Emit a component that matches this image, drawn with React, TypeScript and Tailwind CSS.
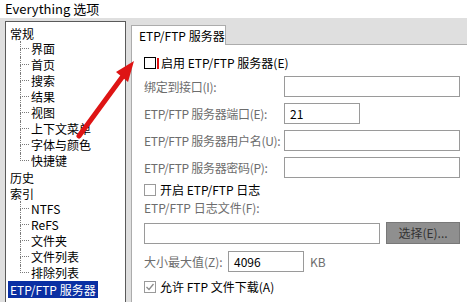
import React from 'react';

type TreeItem = { label: string; child?: boolean; last?: boolean; selected?: boolean };

const treeItems: TreeItem[] = [
  { label: '常规' },
  { label: '界面', child: true },
  { label: '首页', child: true },
  { label: '搜索', child: true },
  { label: '结果', child: true },
  { label: '视图', child: true },
  { label: '上下文菜单', child: true },
  { label: '字体与颜色', child: true },
  { label: '快捷键', child: true, last: true },
  { label: '历史' },
  { label: '索引' },
  { label: 'NTFS', child: true },
  { label: 'ReFS', child: true },
  { label: '文件夹', child: true },
  { label: '文件列表', child: true },
  { label: '排除列表', child: true, last: true },
  { label: 'ETP/FTP 服务器', selected: true },
];

function TreeRow({ item }: { item: TreeItem }) {
  if (item.child) {
    return (
      <div className="flex h-[16px] items-center pl-[14px]">
        <div className="flex h-[16px] w-[9px] flex-col">
          <div className="h-[8px] border-l border-b border-dotted border-[#7a7a7a]" />
          <div className={`h-[8px] ${item.last ? '' : 'border-l border-dotted border-[#7a7a7a]'}`} />
        </div>
        <span className="ml-[2px] leading-[16px] text-black">{item.label}</span>
      </div>
    );
  }
  return (
    <div className="flex h-[16px] items-center pl-[2px]">
      <span
        className={`h-[17px] whitespace-nowrap px-[2px] leading-[17px] ${
          item.selected ? 'bg-[#0a2fa3] text-white' : 'text-black'
        }`}
      >
        {item.label}
      </span>
    </div>
  );
}

function Box({ className = '', children }: { className?: string; children?: React.ReactNode }) {
  return (
    <div className={`flex h-[21px] shrink-0 items-center border border-[#9a9a9a] bg-white pl-[5px] text-black ${className}`}>
      {children}
    </div>
  );
}

function LabeledInput({ label, width = 'w-[176px]', value }: { label: string; width?: string; value?: string }) {
  return (
    <div className="mb-[6px] flex h-[21px] items-center">
      <span className="w-[140px] shrink-0 whitespace-nowrap tracking-[-0.3px] text-[#6d6d6d]">{label}</span>
      <Box className={width}>{value}</Box>
    </div>
  );
}

export default function App() {
  return (
    <div
      className="relative h-[302px] w-[467px] overflow-hidden bg-[#dfdfdf] text-[12px]"
      style={{ fontFamily: '"Noto Sans CJK SC", "Noto Sans", sans-serif' }}
    >
      <div className="flex h-[18px] items-center bg-white pl-[5px] text-[13px] text-black">
        Everything 选项
      </div>

      <div className="flex">
        {/* tree */}
        <div className="ml-[5px] mt-[3px] h-[300px] w-[121px] shrink-0 border border-[#5a5a5a] bg-white pt-[3px]">
          {treeItems.map((item) => (
            <TreeRow key={item.label} item={item} />
          ))}
        </div>

        {/* tab page */}
        <div className="ml-[5px] mt-[7px] flex w-[350px] shrink-0 flex-col">
          <div className="relative z-10 -mb-px flex h-[20px] w-[95px] items-center whitespace-nowrap border border-b-0 border-[#acacac] bg-white pl-[7px] text-black">
            ETP/FTP 服务器
          </div>
          <div className="h-[300px] border border-[#acacac] bg-white pl-[12px] pt-[12px]">
            <div className="flex h-[12px] items-center">
              <div className="h-[12px] w-[12px] border border-black bg-white" />
              <div className="ml-[1px] h-[11px] w-[2px] bg-[#e01010]" />
              <span className="ml-[2px] text-black">启用 ETP/FTP 服务器(E)</span>
            </div>

            <div className="mt-[7px]">
              <LabeledInput label="绑定到接口(I):" />
              <LabeledInput label="ETP/FTP 服务器端口(E):" width="w-[76px]" value="21" />
              <LabeledInput label="ETP/FTP 服务器用户名(U):" />
              <LabeledInput label="ETP/FTP 服务器密码(P):" />
            </div>

            <div className="mt-[1px] flex h-[12px] items-center">
              <div className="h-[12px] w-[12px] border border-[#9a9a9a] bg-white" />
              <span className="ml-[4px] text-black">开启 ETP/FTP 日志</span>
            </div>

            <div className="mt-[4px] h-[16px] leading-[16px] text-[#6d6d6d]">ETP/FTP 日志文件(F):</div>

            <div className="mt-[6px] flex items-center">
              <Box className="w-[236px]" />
              <div className="ml-[6px] flex h-[22px] w-[74px] items-center justify-center border border-[#787878] bg-[#8f8f8f] text-[#333]">
                选择(E)...
              </div>
            </div>

            <div className="mt-[7px] flex h-[21px] items-center">
              <span className="w-[84px] shrink-0 whitespace-nowrap text-[#6d6d6d]">大小最大值(Z):</span>
              <Box className="w-[76px]">4096</Box>
              <span className="ml-[6px] text-[#6d6d6d]">KB</span>
            </div>

            <div className="mt-[9px] flex h-[12px] items-center">
              <div className="flex h-[12px] w-[12px] items-center justify-center border border-[#9a9a9a] bg-white">
                <svg width="10" height="10" viewBox="0 0 10 10">
                  <path d="M1.5 5 L4 7.5 L8.5 2" fill="none" stroke="#8a8a8a" strokeWidth="1.3" />
                </svg>
              </div>
              <span className="ml-[4px] text-black">允许 FTP 文件下载(A)</span>
            </div>
          </div>
        </div>
      </div>

      {/* red annotation arrow */}
      <svg className="pointer-events-none absolute left-0 top-0" width="467" height="302">
        <line x1="79" y1="136" x2="123" y2="76" stroke="#de1414" strokeWidth="5" strokeLinecap="round" />
        <polygon points="134,61 128,82 116,72" fill="#de1414" />
      </svg>
    </div>
  );
}
